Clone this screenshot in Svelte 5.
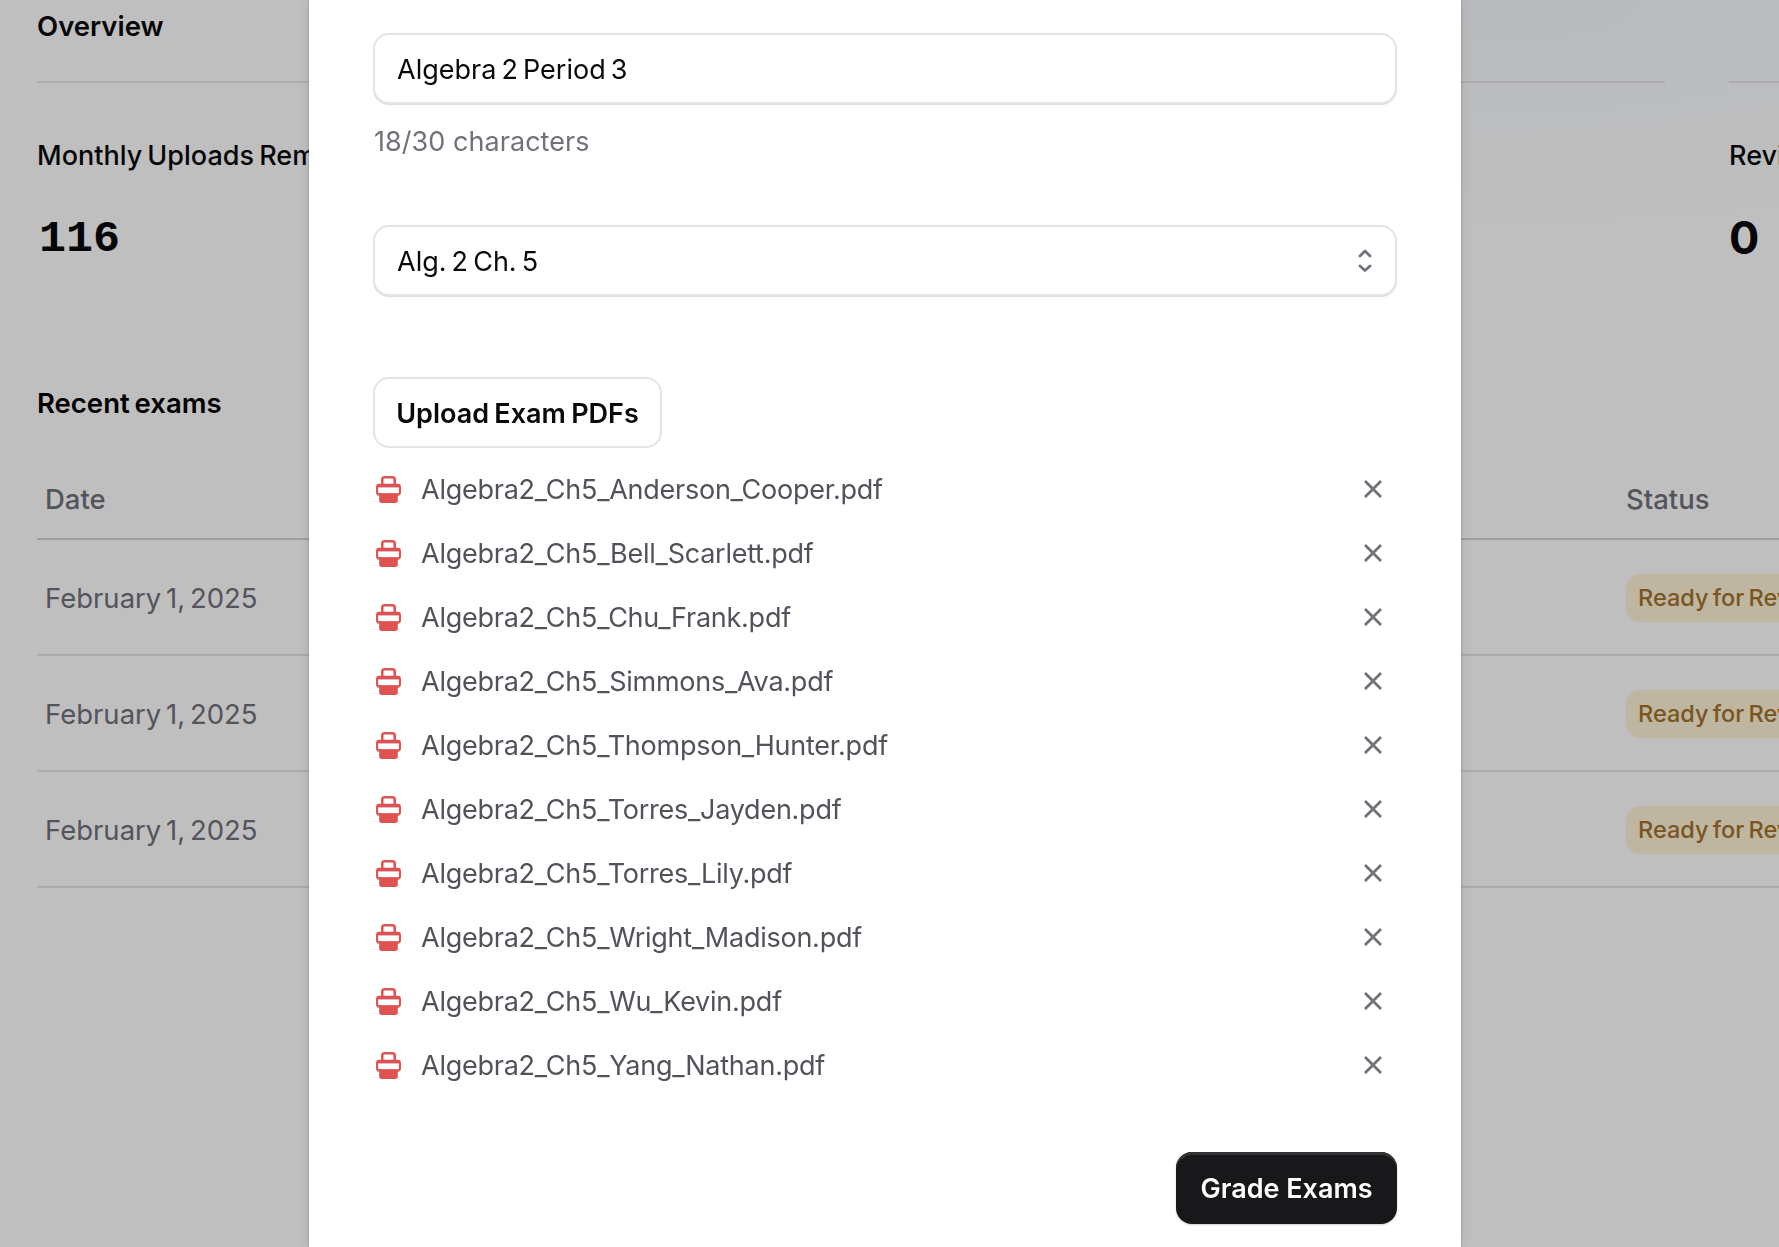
<script lang="ts">
	const files = [
		'Algebra2_Ch5_Anderson_Cooper.pdf',
		'Algebra2_Ch5_Bell_Scarlett.pdf',
		'Algebra2_Ch5_Chu_Frank.pdf',
		'Algebra2_Ch5_Simmons_Ava.pdf',
		'Algebra2_Ch5_Thompson_Hunter.pdf',
		'Algebra2_Ch5_Torres_Jayden.pdf',
		'Algebra2_Ch5_Torres_Lily.pdf',
		'Algebra2_Ch5_Wright_Madison.pdf',
		'Algebra2_Ch5_Wu_Kevin.pdf',
		'Algebra2_Ch5_Yang_Nathan.pdf'
	];
	const rows = ['February 1, 2025', 'February 1, 2025', 'February 1, 2025'];
	let title = $state('Algebra 2 Period 3');
</script>

<div class="page">
	<div class="top">
		<section class="card">
			<h2 class="card-title">Overview</h2>
			<div class="stat-label">Monthly Uploads Remaining</div>
			<div class="stat-value mono">116</div>
		</section>
		<section class="card">
			<div class="card-title">&nbsp;</div>
			<div class="stat-label">Reviewed</div>
			<div class="stat-value">0</div>
		</section>
	</div>

	<h3 class="recent">Recent exams</h3>
	<table>
		<colgroup><col class="col-date" /><col /></colgroup>
		<thead>
			<tr><th>Date</th><th>Status</th></tr>
		</thead>
		<tbody>
			{#each rows as date}
				<tr>
					<td>{date}</td>
					<td><span class="badge">Ready for Review</span></td>
				</tr>
			{/each}
		</tbody>
	</table>
</div>

<div class="overlay">
	<div class="modal">
		<input class="field" bind:value={title} />
		<p class="hint">{title.length}/30 characters</p>

		<div class="select-wrap">
			<select class="field">
				<option>Alg. 2 Ch. 5</option>
			</select>
			<svg class="updown" width="16" height="26" viewBox="0 0 16 26" fill="none">
				<path d="M3 8l5-5 5 5M3 18l5 4.5 5-4.5" stroke="currentColor" stroke-width="2.8" stroke-linecap="round" stroke-linejoin="round"/>
			</svg>
		</div>

		<button class="upload">Upload Exam PDFs</button>

		<ul class="files">
			{#each files as name}
				<li>
					<svg class="pdf" width="27" height="27" viewBox="0 0 26 26">
						<rect x="7" y="1.2" width="12" height="9" rx="2.4" fill="#fff" stroke="#e05252" stroke-width="2.4"/>
						<rect x="1" y="7.5" width="24" height="11.5" rx="3" fill="#e05252"/>
						<rect x="4" y="14" width="18" height="12" rx="2.6" fill="#e05252"/>
						<rect x="3" y="11" width="20" height="5.5" fill="#fff"/>
					</svg>
					<span class="name">{name}</span>
					<svg class="remove" width="20" height="20" viewBox="0 0 20 20" fill="none">
						<path d="M2 2l16 16M18 2L2 18" stroke="currentColor" stroke-width="2.8"/>
					</svg>
				</li>
			{/each}
		</ul>

		<div class="actions">
			<button class="grade">Grade Exams</button>
		</div>
	</div>
</div>

<style>
	:global(body) {
		overflow: hidden;
		font-family: Inter, 'Liberation Sans', sans-serif;
		background: #fff;
	}

	.page {
		height: 1247px;
		overflow: hidden;
		padding-left: 37px;
		background: radial-gradient(ellipse 800px 230px at 1500px 0, #f6f9fd, #fff);
	}

	.top {
		display: grid;
		grid-template-columns: 1628px 1fr;
		column-gap: 64px;
	}

	.card-title {
		margin: 0;
		height: 83px;
		box-sizing: border-box;
		padding-top: 9px;
		font-size: 27.5px;
		line-height: 34px;
		font-weight: 600;
		word-spacing: -2px;
		color: #09090b;
		border-bottom: 2px solid #e7e7ea;
	}

	.stat-label {
		margin-top: 55px;
		font-size: 27px;
		line-height: 36px;
		font-weight: 500;
		word-spacing: -2px;
		color: #09090b;
		white-space: nowrap;
	}

	.stat-value {
		margin-top: 36px;
		font-size: 45px;
		line-height: 56px;
		font-weight: 700;
		color: #09090b;
	}

	.mono {
		padding: 2px 0 0 2px;
		font-family: 'Liberation Mono', monospace;
	}

	.recent {
		margin: 118px 0 0;
		font-size: 27.5px;
		line-height: 34px;
		font-weight: 600;
		word-spacing: -2px;
		color: #000;
	}

	table {
		width: 100%;
		margin-top: 40px;
		border-collapse: collapse;
		table-layout: fixed;
	}

	.col-date { width: 1581px; }

	th {
		height: 78px;
		padding: 0 8px;
		text-align: left;
		font-size: 27.5px;
		font-weight: 500;
		color: #71717a;
		border-bottom: 2px solid #d4d4d8;
	}

	td {
		height: 116px;
		padding: 2px 8px 0;
		box-sizing: border-box;
		font-size: 27.5px;
		word-spacing: -3px;
		color: #71717a;
		border-bottom: 2px solid #e4e4e7;
		white-space: nowrap;
	}

	.badge {
		display: inline-block;
		padding: 0 12px;
		height: 48px;
		line-height: 47px;
		border-radius: 14px;
		background: #fef3d6;
		color: #a3722a;
		font-size: 23.5px;
		font-weight: 500;
		word-spacing: -2px;
	}

	.overlay {
		position: fixed;
		inset: 0;
		padding-right: 9px;
		background: rgba(0, 0, 0, 0.25);
		display: flex;
		justify-content: center;
		overflow: hidden;
	}

	.modal {
		width: 1152px;
		height: 100%;
		box-sizing: border-box;
		padding: 33px 64px 0;
		background: #fff;
		box-shadow: 0 0 14px rgba(0, 0, 0, 0.1), 0 0 2px rgba(0, 0, 0, 0.28);
	}

	.field {
		display: block;
		width: 100%;
		height: 71px;
		box-sizing: border-box;
		padding: 2px 22px 0;
		background: #fff;
		border: 2px solid #e4e4e7;
		border-radius: 16px;
		box-shadow: 0 1px 1px rgba(0, 0, 0, 0.14);
		font: inherit;
		font-size: 27px;
		word-spacing: -2.5px;
		color: #09090b;
		outline: none;
		appearance: none;
	}

	.hint {
		margin: 20px 0 0;
		padding-left: 1px;
		font-size: 27px;
		line-height: 36px;
		letter-spacing: 0.05px;
		color: #71717a;
	}

	.select-wrap {
		position: relative;
		margin-top: 65px;
	}

	.updown {
		position: absolute;
		right: 24px;
		top: 23px;
		color: #71717a;
	}

	.upload {
		display: block;
		margin-top: 81px;
		height: 71px;
		width: 289px;
		padding: 2px 0 0;
		background: #fff;
		border: 2px solid #e4e4e7;
		border-radius: 16px;
		font: inherit;
		font-size: 27px;
		font-weight: 600;
		word-spacing: -1.5px;
		color: #09090b;
	}

	.files {
		list-style: none;
		margin: 9px 0 0;
		padding: 0;
	}

	.files li {
		display: flex;
		align-items: center;
		height: 64px;
		padding: 0 14px 0 2px;
	}

	.pdf { flex-shrink: 0; }

	.name {
		flex: 1;
		margin-left: 19px;
		font-size: 27px;
		letter-spacing: -0.25px;
		color: #52525b;
	}

	.remove {
		flex-shrink: 0;
		color: #71717a;
	}

	.actions {
		display: flex;
		justify-content: flex-end;
		margin-top: 55px;
	}

	.grade {
		width: 221px;
		height: 72px;
		padding: 0;
		background: #18181b;
		border: none;
		border-radius: 16px;
		box-shadow: inset 0 3px 0 #333336, 0 1px 2px rgba(0, 0, 0, 0.2);
		font: inherit;
		font-size: 27px;
		font-weight: 600;
		color: #fff;
	}
</style>
